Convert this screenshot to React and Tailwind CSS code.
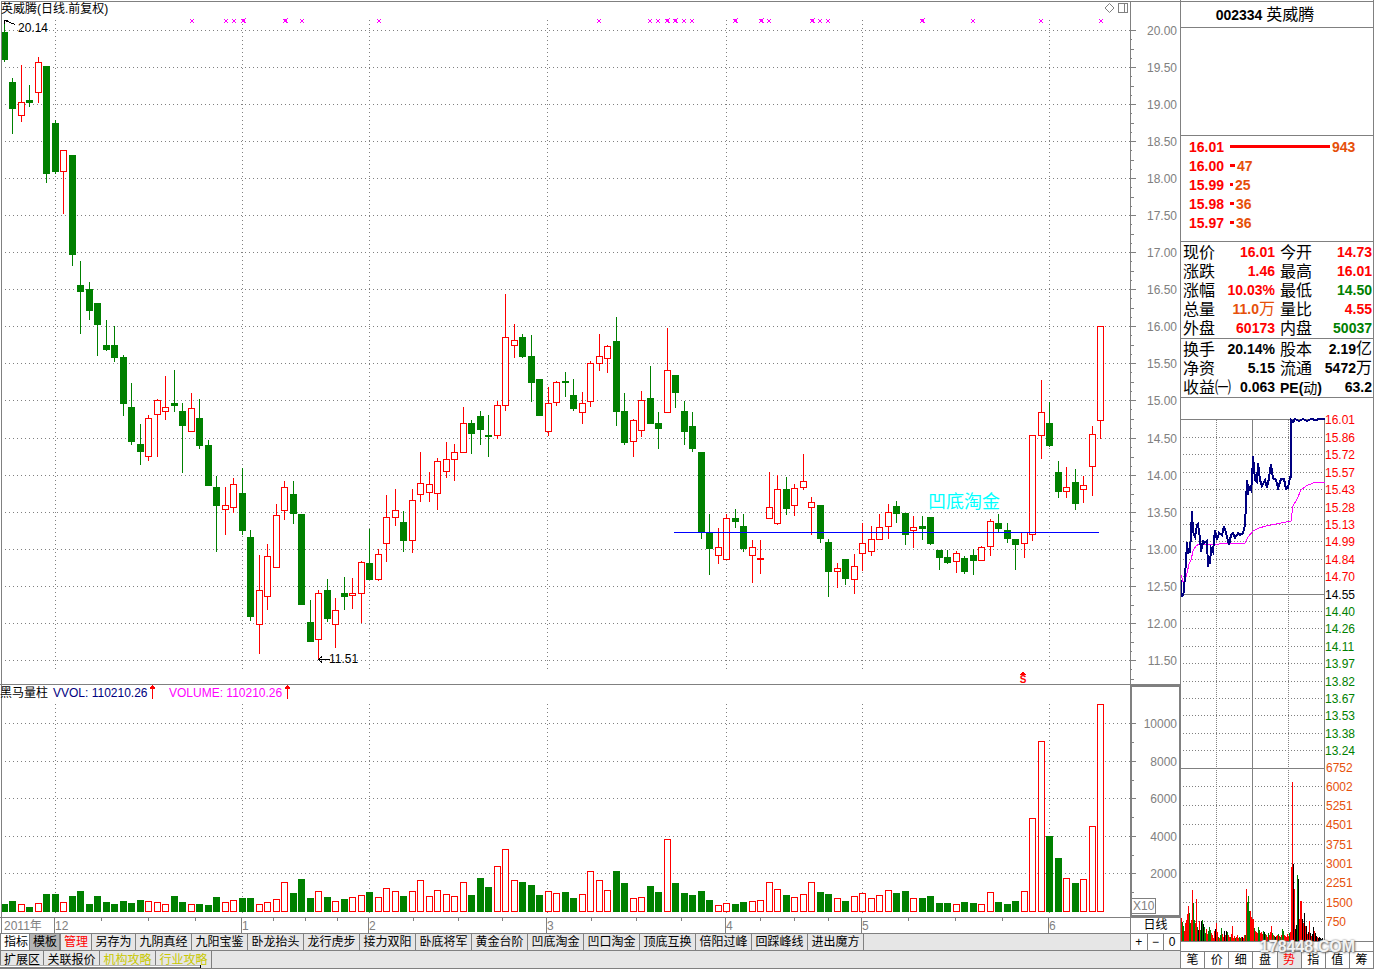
import React from "react";

const GRAY = "#808080";
const UP = "#ff0000";
const DOWN = "#008000";
const SANS = '"Liberation Sans", "Noto Sans CJK SC", sans-serif';

/* One entry per trading day: direction, high, body top, body bottom, low, volume top */
const DAYS = `
G 20 32 60 62 904|G 78 82 109 134 901|R 65 102 116 122 904|G 85 100 103 107 907|R 57 62 93 103 903
G 66 66 174 183 894|G 120 123 172 174 894|R 150 150 172 214 902|G 155 155 255 266 896|G 261 285 292 334 891
G 282 289 311 320 904|G 303 303 325 356 896|G 320 345 350 351 902|G 326 345 358 362 904|G 355 357 404 416 901
G 383 407 442 445 903|G 424 444 452 465 900|R 415 418 457 461 901|R 399 400 415 457 902|R 376 407 412 420 904
G 370 403 406 412 896|G 403 411 426 473 902|R 393 408 432 432 904|G 399 418 446 449 904|G 440 445 486 486 905
G 476 487 506 552 897|R 487 505 510 535 902|R 478 484 508 513 900|G 468 493 531 535 898|G 530 537 617 621 898
R 555 590 625 654 904|R 544 556 597 610 902|R 504 515 568 568 899|R 481 487 511 520 882|G 481 494 514 524 893
G 514 514 605 605 879|G 600 622 642 642 898|R 590 593 640 660 891|G 579 590 619 622 897|R 598 610 625 648 901
G 577 593 597 610 899|R 578 593 596 609 897|R 561 562 594 623 895|G 529 563 580 580 892|R 549 554 580 581 897
R 495 517 544 562 888|R 489 510 518 526 891|G 511 522 541 552 896|R 489 500 541 553 891|R 452 483 495 502 880
R 472 484 493 502 896|R 458 461 494 510 890|R 442 459 472 478 894|R 444 452 460 481 896|R 407 423 453 453 882
G 420 423 434 454 895|G 411 416 430 445 878|G 415 435 437 457 887|R 401 405 436 439 866|R 294 337 406 411 849
R 324 340 346 358 880|G 334 337 357 358 882|G 335 356 383 402 885|G 379 379 416 416 895|R 387 403 432 436 891
R 381 382 403 406 893|G 372 381 383 397 892|G 379 395 409 411 898|R 392 403 413 424 894|R 361 363 402 407 871
R 334 356 364 371 880|R 345 346 359 373 890|G 317 341 412 426 871|G 393 411 443 445 883|R 419 420 442 457 898
R 391 400 431 437 897|G 366 398 424 424 886|G 412 423 429 449 892|R 328 370 413 413 839|G 375 375 393 408 883
G 401 411 432 445 893|G 412 426 449 452 895|G 452 452 533 539 891|G 514 533 549 575 900|R 528 547 556 564 905
R 514 518 560 560 903|G 509 518 522 528 904|G 514 526 549 552 902|R 540 547 556 583 901|R 540 558 560 574 900
R 472 507 519 519 882|R 475 489 524 525 889|G 477 489 509 515 895|R 484 488 506 516 897|R 454 481 488 490 894
R 497 502 508 535 882|G 505 505 539 543 892|G 539 542 572 597 894|R 563 568 572 588 898|G 559 559 579 585 901
R 554 566 580 594 896|R 523 543 554 571 893|R 526 539 552 556 898|R 514 527 540 540 895|R 504 512 527 539 890
G 501 506 514 523 893|G 513 513 535 545 891|R 516 527 531 548 898|G 516 526 529 540 898|G 517 517 544 545 896
G 550 550 558 570 903|G 550 557 563 564 903|R 551 553 562 573 904|G 556 558 572 574 902|G 549 555 561 575 903
R 546 547 561 561 904|R 519 521 547 556 892|G 514 523 529 533 902|G 523 530 539 543 904|G 539 539 545 570 901
R 532 532 544 558 891|R 435 435 535 541 818|R 380 412 436 459 741|G 402 423 446 447 836|G 461 472 492 498 858
R 467 487 492 498 878|G 469 482 504 510 883|R 476 485 490 503 879|R 426 434 467 496 826|R 326 326 421 439 704`
  .trim()
  .split(/[|\n]/)
  .map((row, i) => {
    const [dir, ...n] = row.trim().split(" ");
    const [high, top, bottom, low, vol] = n.map(Number);
    return { x: Math.floor(4 + 8.5 * i), up: dir === "R", high, top, bottom, low, vol };
  });

const MONTHS = [
  { x: 55, label: "12" },
  { x: 242, label: "1" },
  { x: 369, label: "2" },
  { x: 547, label: "3" },
  { x: 726, label: "4" },
  { x: 862, label: "5" },
  { x: 1049, label: "6" },
];

const PRICES = Array.from({ length: 18 }, (_, i) => ({
  y: (i > 10 ? 31 : 30) + i * 37,
  label: (20 - i * 0.5).toFixed(2),
}));

const MARKS = [192, 226, 234, 243, 285, 302, 379, 599, 650, 658, 667, 675, 684, 692, 735, 761, 769, 812, 820, 828, 922, 973, 1041, 1101];
const BOLD_MARKS = [243, 285, 667, 675, 735, 761, 812, 922];

function Body({ x, top, bottom, up }) {
  if (!up || bottom - top < 3) {
    return <rect x={x - 3} y={top} width="7" height={bottom - top} fill={up ? UP : DOWN} />;
  }
  return <rect x={x - 2.5} y={top + 0.5} width="6" height={bottom - top - 1} fill="#fff" stroke={UP} />;
}

function DotRow({ y, x1 = 5, x2 = 1130, gap = 3 }) {
  return <line x1={x1} x2={x2} y1={y + 0.5} y2={y + 0.5} stroke={GRAY} strokeDasharray={`1 ${gap}`} />;
}

function DotColumn({ x, y1, y2, gap = 3 }) {
  return <line x1={x + 0.5} x2={x + 0.5} y1={y1} y2={y2} stroke={GRAY} strokeDasharray={`1 ${gap}`} />;
}

function PriceChart() {
  return (
    <svg viewBox="0 0 1180 685" className="block h-auto w-full" fontFamily={SANS} fontSize="12" shapeRendering="crispEdges" role="img" aria-label="英威腾 日线">
      {PRICES.map((p) => (
        <g key={p.label}>
          <DotRow y={p.y} />
          <rect x="1131" y={p.y} width="5" height="1" fill={GRAY} />
          <rect x="1131" y={p.y + 9} width="1" height="1" fill={GRAY} />
          <rect x="1131" y={p.y + 19} width="3" height="1" fill={GRAY} />
          {p.y < 660 && <rect x="1131" y={p.y + 28} width="1" height="1" fill={GRAY} />}
          <text x="1177" y={p.y + 5} textAnchor="end" fill={GRAY}>{p.label}</text>
        </g>
      ))}
      {MONTHS.map((m) => (
        <DotColumn key={m.label} x={m.x} y1={20} y2={669} />
      ))}
      {MARKS.map((x) => (
        <g key={x} fill="#ff00ff">
          <path d={`M${x - 2} 19h1v1h-1zM${x + 1} 19h1v1h-1zM${x - 1} 20h2v2h-2zM${x - 2} 22h1v1h-1zM${x + 1} 22h1v1h-1z`} />
          {BOLD_MARKS.includes(x) && <path d={`M${x - 1} 19h3v3h-3zM${x + 2} 18h1v1h-1zM${x + 2} 22h1v1h-1z`} />}
        </g>
      ))}
      {DAYS.map((d) => (
        <g key={d.x}>
          <rect x={d.x} y={d.high} width="1" height={d.low - d.high} fill={d.up ? UP : DOWN} />
          <Body {...d} />
        </g>
      ))}
      <path d="M1 1.5H1180M1.5 1V685M0 684.5H1180M1130.5 1V685" stroke={GRAY} fill="none" />
      <rect x="674" y="532" width="425" height="1" fill="#0000ff" />
      <text x="1" y="13" fill="#000">英威腾(日线.前复权)</text>
      <path d="M5 20.5L15 24.5M4.5 24V20.5H8" stroke="#000" fill="none" />
      <text x="18" y="32" fill="#000">20.14</text>
      <path d="M318 659.5H330M322 656.5L318.5 659.5L322 662.5" stroke="#000" fill="none" />
      <text x="329" y="663" fill="#000">11.51</text>
      <text x="928" y="508" fontSize="18" fill="#00ffff">凹底淘金</text>
      <path d="M1022 672h2v1h1v1h1v1h-6v-1h1v-1h1z" fill={UP} />
      <text x="1023" y="683" fontSize="10" fontWeight="700" textAnchor="middle" fill={UP}>S</text>
      <path d="M1109.5 3.5L1114 8L1109.5 12.5L1105 8Z" stroke={GRAY} fill="none" shapeRendering="auto" />
      <path d="M1118.5 3.5H1127.5V12.5H1118.5ZM1124.5 3.5V12.5" stroke={GRAY} fill="none" />
    </svg>
  );
}

function VolumeChart() {
  const rows = [
    [723, "10000"],
    [761, "8000"],
    [798, "6000"],
    [836, "4000"],
    [873, "2000"],
  ];
  return (
    <svg viewBox="0 685 1180 233" className="block h-auto w-full" fontFamily={SANS} fontSize="12" shapeRendering="crispEdges" role="img" aria-label="黑马量柱">
      {rows.map(([y, label]) => (
        <g key={label}>
          <DotRow y={y} />
          <rect x="1132" y={y} width="4" height="1" fill={GRAY} />
          <rect x="1132" y={y + 19} width="2" height="1" fill={GRAY} />
          <text x="1177" y={y + 5} textAnchor="end" fill={GRAY}>{label}</text>
        </g>
      ))}
      {MONTHS.map((m) => (
        <DotColumn key={m.label} x={m.x} y1={704} y2={913} />
      ))}
      {DAYS.map((d) => (
        <Body key={d.x} x={d.x} top={d.vol} bottom={912} up={d.up} />
      ))}
      <path d="M1.5 685V918M0 917.5H1180" stroke={GRAY} fill="none" />
      <path d="M1131 685V916H1180V686H1131" stroke={GRAY} strokeWidth="2" fill="none" />
      <rect x="1131.5" y="898.5" width="24" height="15" fill="#fff" stroke={GRAY} />
      <text x="1133" y="910" fill={GRAY}>X10</text>
      <text x="0" y="697" fill="#000">黑马量柱</text>
      <text x="53" y="697" fill="#000080">VVOL: 110210.26</text>
      <path d="M152 685h1v1h1v1h1v2h-2v10h-1v-10h-2v-2h1v-1h1z" fill={UP} />
      <text x="169" y="697" fill="#ff00ff">VOLUME: 110210.26</text>
      <path d="M287 685h1v1h1v1h1v2h-2v10h-1v-10h-2v-2h1v-1h1z" fill={UP} />
    </svg>
  );
}

function TimeAxis() {
  const ticks = MONTHS.slice(0, -1).flatMap((m, i) =>
    [1, 2, 3].map((k) => Math.floor(m.x + ((MONTHS[i + 1].x - m.x) * k) / 4))
  );
  return (
    <svg viewBox="0 918 1130 15" className="block h-[15px] min-w-0 flex-1" fontFamily={SANS} fontSize="12" shapeRendering="crispEdges" role="img" aria-label="2011年">
      <rect x="1" y="918" width="1" height="15" fill={GRAY} />
      <text x="4" y="930" fill={GRAY}>2011年</text>
      {ticks.map((x) => (
        <rect key={x} x={x} y="918" width="1" height="3" fill={GRAY} />
      ))}
      {MONTHS.map((m) => (
        <g key={m.x} fill={GRAY}>
          <rect x={m.x - 1} y="918" width="1" height="15" />
          <text x={m.x} y="930">{m.label}</text>
        </g>
      ))}
    </svg>
  );
}

const FORMULAS = ["另存为", "九阴真经", "九阳宝鉴", "卧龙抬头", "龙行虎步", "接力双阳", "卧底将军", "黄金台阶", "凹底淘金", "凹口淘金", "顶底互换", "倍阳过峰", "回踩峰线", "进出魔方"];

function Tab({ children, className = "" }) {
  return (
    <button type="button" className={`h-full shrink-0 border-r border-[#808080] px-[3px] text-center whitespace-nowrap ${className}`}>
      {children}
    </button>
  );
}

function FooterTabs() {
  return (
    <div className="relative text-xs leading-4">
      <div className="flex h-[17px] border-b border-[#808080] bg-[#e6e6e6]">
        <div className="flex min-w-0 flex-1 overflow-hidden border-l border-[#808080]">
          <Tab className="w-[29px] bg-white px-0">指标</Tab>
          <Tab className="w-[31px] border-r-2 bg-[#b4b4b4] px-0">模板</Tab>
          <Tab className="w-[31px] bg-[#ececec] px-0 text-[#ff0000]">管理</Tab>
          {FORMULAS.map((name, i) => (
            <Tab key={name} className={i === 0 ? "w-11" : "w-14"}>{name}</Tab>
          ))}
        </div>
        <div className="flex w-[50px] shrink-0 border-l border-[#808080] bg-white">
          <button type="button" aria-label="放大" className="flex-1 border-r border-[#808080]">+</button>
          <button type="button" aria-label="缩小" className="flex-1 border-r border-[#808080]">−</button>
          <button type="button" className="flex-1">0</button>
        </div>
      </div>
      <div className="flex h-[18px] border-b border-l border-[#808080] bg-[#e6e6e6]">
        <Tab className="w-[43px]">扩展区</Tab>
        <Tab className="w-14">关联报价</Tab>
        <Tab className="w-14 text-[#c8c800]">机构攻略</Tab>
        <Tab className="w-14 text-[#c8c800]">行业攻略</Tab>
      </div>
      <svg viewBox="0 0 202 4" width="202" height="4" className="absolute bottom-0 left-0" shapeRendering="crispEdges" aria-hidden="true">
        <path d="M0 .5H200" stroke="#b0b0b0" />
        <path d="M0 1.5H200" stroke="#fff" />
        <path d="M0 2.5H200" stroke="#808080" />
        <path d="M200.5 0V3" stroke="#000" />
      </svg>
    </div>
  );
}

const ORDERS = [
  ["16.01", 100, "943"],
  ["16.00", 5, "47"],
  ["15.99", 3, "25"],
  ["15.98", 4, "36"],
  ["15.97", 4, "36"],
];

function OrderBook() {
  return (
    <ul className="h-[106px] border-b border-[#808080] pt-px pl-2 text-sm font-bold">
      {ORDERS.map(([price, size, qty]) => (
        <li key={price} className="flex h-[19px] items-center">
          <span className="w-[41px] text-[#ff0000]">{price}</span>
          <span className="h-[3px] bg-[#ff0000]" style={{ width: size }} />
          <span className="pl-[2px] text-[#e6500a]">{qty}</span>
        </li>
      ))}
    </ul>
  );
}

const RED = "text-[#ff0000]";
const GREEN = "text-[#008000]";
const ORANGE = "text-[#e6500a]";

const QUOTE = [
  ["现价", "16.01", "", RED, "今开", "14.73", "", RED],
  ["涨跌", "1.46", "", RED, "最高", "16.01", "", RED],
  ["涨幅", "10.03%", "", RED, "最低", "14.50", "", GREEN],
  ["总量", "11.0", "万", ORANGE, "量比", "4.55", "", RED],
  ["外盘", "60173", "", RED, "内盘", "50037", "", GREEN],
];

const BASICS = [
  ["换手", "20.14%", "", "", "股本", "2.19", "亿", ""],
  ["净资", "5.15", "", "", "流通", "5472", "万", ""],
  ["收益㈠", "0.063", "", "", "PE(动)", "63.2", "", ""],
];

function Unit({ children }) {
  return <span className="text-base leading-none font-normal">{children}</span>;
}

function QuoteTable({ rows }) {
  return (
    <div className="border-b border-[#808080] pt-px">
      <table className="w-full table-fixed border-collapse">
        <colgroup>
          <col className="w-[34px]" />
          <col className="w-[65px]" />
          <col className="w-[34px]" />
          <col />
        </colgroup>
        <tbody>
          {rows.map(([a, av, au, ac, b, bv, bu, bc]) => (
            <tr key={a} className="h-[19px] text-sm leading-[17px] whitespace-nowrap">
              <th scope="row" className="py-0 pr-0 pl-[2px] text-left text-base leading-[17px] font-normal">{a}</th>
              <td className={`py-0 pr-[5px] text-right font-bold ${ac}`}>
                {av}
                {au && <Unit>{au}</Unit>}
              </td>
              <th scope="row" className="p-0 text-left text-base leading-[17px] font-normal">
                {b === "PE(动)" ? (
                  <span className="text-sm leading-none font-bold">
                    PE(<span className="font-normal">动</span>)
                  </span>
                ) : (
                  b
                )}
              </th>
              <td className={`py-0 pr-px pl-0 text-right font-bold ${bc}`}>
                {bv}
                {bu && <Unit>{bu}</Unit>}
              </td>
            </tr>
          ))}
        </tbody>
      </table>
    </div>
  );
}

const INTRADAY_LABELS = [
  [419, "16.01"], [437, "15.86"], [454, "15.72"], [472, "15.57"], [489, "15.43"], [507, "15.28"], [524, "15.13"],
  [541, "14.99"], [559, "14.84"], [576, "14.70"], [594, "14.55"], [611, "14.40"], [628, "14.26"], [646, "14.11"],
  [663, "13.97"], [681, "13.82"], [698, "13.67"], [715, "13.53"], [733, "13.38"], [750, "13.24"],
];

const FLOW_LABELS = [
  [768, "6752"], [787, "6002"], [806, "5251"], [825, "4501"], [845, "3751"], [864, "3001"], [883, "2251"], [903, "1500"], [922, "750"],
];

const PRICE_LINE =
  "1180,572 1181,588 1182,597 1184,592 1185,573 1186,563 1187,542 1188,553 1190,552 1191,533 1192,511 1193,532 1195,537 1197,525 1198,524 1200,538 1201,552 1203,540 1204,543 1207,541 1208,567 1209,561 1210,564 1211,548 1213,552 1214,540 1215,530 1217,540 1219,533 1222,535 1224,526 1226,533 1229,545 1231,535 1233,533 1235,538 1238,533 1240,535 1243,533 1245,525 1246,503 1247,480 1248,495 1249,487 1251,490 1252,480 1253,456 1255,480 1257,482 1258,463 1260,480 1262,486 1265,480 1267,488 1269,478 1271,464 1273,478 1276,480 1278,488 1281,479 1284,479 1286,489 1288,488 1290,477 1291,477 1291,420 1293,422 1295,419 1299,421 1303,419 1307,421 1311,419 1316,420 1319,419 1325,419";

const AVERAGE_LINE =
  "1180,573 1182,578 1184,585 1187,573 1189,564 1191,560 1193,551 1196,546 1199,544 1213,545 1226,543 1245,543 1248,537 1253,531 1259,528 1266,526 1276,524 1291,521 1293,506 1297,499 1301,490 1306,486 1313,483 1325,482";

/* Per-minute turnover: one pixel column each, colour letter followed by height */
const FLOW =
  "R23 G19 G15 R10 R18 R21 R27 R35 G28 G18 R21 R51 G38 G21 R18 R42 G14 K11 R20 G11 K20 G21 K17 G14 G8 R12 R7 G10 G14 G11 R8 R6 R3 R10 K12 R18 R9 G4 R3 G6 G13 R7 R4 K10 R6 K10 G9 R6 R4 G4 R7 R15 R3 R5 G3 R4 R6 R3 G4 G3 R4 K4 R3 R6 G6 R52 G39 G45 G30 R30 R24 R22 R22 G13 R10 R9 R8 G14 G11 R8 R9 R7 G10 K9 G7 R6 R4 G8 R6 R9 R15 G8 R6 G5 K4 R5 R6 G7 R5 G4 R6 G12 G10 R6 R5 R4 R7 R5 G8 R9 R74 R159 K77 R52 K12 K16 G66 K62 R22 R40 R40 K22 R18 K28 R15 K15 R7 K9 R20 K8 R5 K7 K14 R10 K8 K5 R4 K3 K4 K3 K2 K3"
    .split(" ")
    .map((s) => [s[0], Number(s.slice(1))]);
const FLOW_COLORS = { R: UP, G: DOWN, K: "#000000" };

function IntradayChart() {
  return (
    <svg viewBox="1181 398 192 544" className="block h-auto w-full" fontFamily={SANS} fontSize="12" shapeRendering="crispEdges" role="img" aria-label="分时走势">
      {INTRADAY_LABELS.map(([y, label]) => (
        <g key={label}>
          {label !== "16.01" && label !== "14.55" && <DotRow y={y} x1={1183} x2={1324} gap={2} />}
          <text x="1325" y={y + 5} fill={y < 594 ? UP : y > 594 ? DOWN : "#000"}>{label}</text>
        </g>
      ))}
      {FLOW_LABELS.map(([y, label]) => (
        <g key={label}>
          {y > 768 && <DotRow y={y - 1} x1={1183} x2={1324} gap={2} />}
          <text x="1326" y={y + 4} fill="#e6500a">{label}</text>
        </g>
      ))}
      <DotColumn x={1216} y1={420} y2={941} gap={1} />
      <DotColumn x={1288} y1={420} y2={941} gap={1} />
      <path d="M1181 419.5H1325M1181 594.5H1325M1181 768.5H1325M1181 941.5H1373M1252.5 419V941M1324.5 419V941" stroke={GRAY} fill="none" />
      {FLOW.map(([c, h], i) => (
        <rect key={i} x={1181 + i} y={941 - h} width="1" height={h} fill={FLOW_COLORS[c]} />
      ))}
      <polyline points={AVERAGE_LINE} fill="none" stroke="#ff00ff" />
      <polyline points={PRICE_LINE} fill="none" stroke="#000080" strokeWidth="2" />
    </svg>
  );
}

function SidePanel() {
  return (
    <aside className="relative flex w-[194px] shrink-0 flex-col border-x border-[#808080]">
      <h1 className="mt-px flex h-[27px] items-center justify-center gap-1 border-y border-[#808080] pr-6 text-sm font-bold">
        002334 <span className="text-base font-normal">英威腾</span>
      </h1>
      <div className="h-[108px] border-b border-[#808080]" />
      <OrderBook />
      <QuoteTable rows={QUOTE} />
      <QuoteTable rows={BASICS} />
      <IntradayChart />
      <div className="mt-[9px] flex h-[18px] border-y border-[#808080] text-xs leading-4">
        {["笔", "价", "细", "盘", "势", "指", "值", "筹"].map((name) => (
          <button
            key={name}
            type="button"
            className={`flex-1 border-r border-[#808080] last:border-r-0 ${name === "势" ? "bg-[#e6e6e6] text-[#ff0000]" : ""}`}
          >
            {name}
          </button>
        ))}
      </div>
      <div className="pointer-events-none absolute right-[18px] bottom-[12px] text-[16px] leading-5 font-bold text-white/90 [text-shadow:0_0_2px_#777,1px_1px_2px_#666]">
        178448.COM
      </div>
    </aside>
  );
}

export default function App() {
  return (
    <div className="flex w-full items-start bg-white text-black" style={{ fontFamily: SANS }}>
      <main className="min-w-0 flex-1">
        <PriceChart />
        <VolumeChart />
        <div className="flex h-4 border-b border-[#808080]">
          <TimeAxis />
          <button type="button" className="w-[50px] shrink-0 border-l border-[#808080] text-xs leading-[15px]">日线</button>
        </div>
        <FooterTabs />
      </main>
      <SidePanel />
    </div>
  );
}
